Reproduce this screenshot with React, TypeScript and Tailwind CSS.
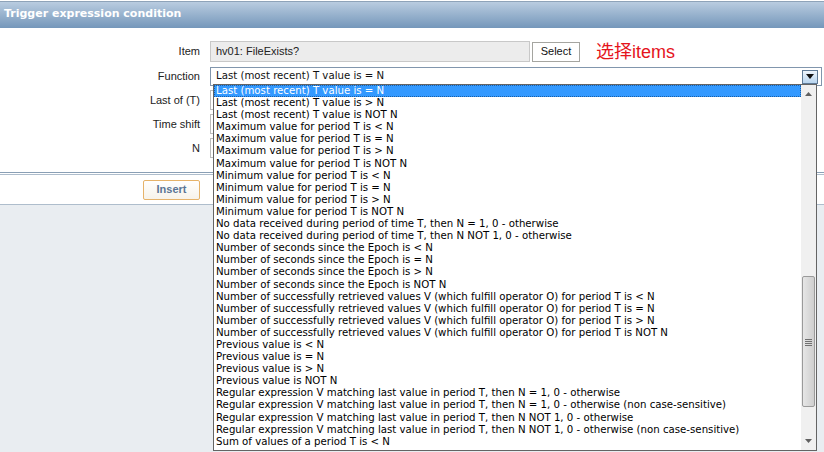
const options = [
  "Last (most recent) T value is = N",
  "Last (most recent) T value is > N",
  "Last (most recent) T value is NOT N",
  "Maximum value for period T is < N",
  "Maximum value for period T is = N",
  "Maximum value for period T is > N",
  "Maximum value for period T is NOT N",
  "Minimum value for period T is < N",
  "Minimum value for period T is = N",
  "Minimum value for period T is > N",
  "Minimum value for period T is NOT N",
  "No data received during period of time T, then N = 1, 0 - otherwise",
  "No data received during period of time T, then N NOT 1, 0 - otherwise",
  "Number of seconds since the Epoch is < N",
  "Number of seconds since the Epoch is = N",
  "Number of seconds since the Epoch is > N",
  "Number of seconds since the Epoch is NOT N",
  "Number of successfully retrieved values V (which fulfill operator O) for period T is < N",
  "Number of successfully retrieved values V (which fulfill operator O) for period T is = N",
  "Number of successfully retrieved values V (which fulfill operator O) for period T is > N",
  "Number of successfully retrieved values V (which fulfill operator O) for period T is NOT N",
  "Previous value is < N",
  "Previous value is = N",
  "Previous value is > N",
  "Previous value is NOT N",
  "Regular expression V matching last value in period T, then N = 1, 0 - otherwise",
  "Regular expression V matching last value in period T, then N = 1, 0 - otherwise (non case-sensitive)",
  "Regular expression V matching last value in period T, then N NOT 1, 0 - otherwise",
  "Regular expression V matching last value in period T, then N NOT 1, 0 - otherwise (non case-sensitive)",
  "Sum of values of a period T is < N",
];

function Row({ label, children }: { label: string; children?: React.ReactNode }) {
  return (
    <div className="flex h-[24px] items-center">
      <div className="w-[200px] text-right text-[#222]">{label}</div>
      <div className="ml-[10px] flex flex-1 items-center">{children}</div>
    </div>
  );
}

function Dropdown() {
  return (
    <div className="absolute left-[213px] top-[84px] flex h-[367px] w-[604px] border border-[#646464] bg-white font-['DejaVu_Sans',_sans-serif] text-[10.2px]">
      <div className="flex-1">
        {options.map((o, i) => (
          <div
            key={o}
            className={
              i === 0
                ? "h-[12.1px] whitespace-nowrap bg-[#3399ff] pl-[2px] leading-[12px] text-white outline-1 outline-dotted outline-[#1b5fa6] -outline-offset-1"
                : "h-[12.1px] whitespace-nowrap pl-[2px] leading-[12px] text-black"
            }
          >
            {o}
          </div>
        ))}
      </div>
      {/* scrollbar */}
      <div className="flex w-[15px] flex-col bg-[#f0f0f0]">
        <div className="flex h-[17px] items-center justify-center">
          <svg width="7" height="4" viewBox="0 0 7 4">
            <path d="M0 4 L3.5 0 L7 4 Z" fill="#606060" />
          </svg>
        </div>
        <div className="h-[174px]" />
        <div className="mx-[1px] flex h-[131px] items-center justify-center rounded-[2px] border border-[#9a9a9a] bg-gradient-to-r from-[#e6e6e6] via-[#dadada] to-[#cfcfcf]">
          <svg width="7" height="8" viewBox="0 0 7 8">
            <path d="M0 1.5 H7 M0 3.5 H7 M0 5.5 H7 M0 7.5 H7" stroke="#707070" strokeWidth="1" />
          </svg>
        </div>
        <div className="flex flex-1 items-end justify-center pb-[7px]">
          <svg width="7" height="4" viewBox="0 0 7 4">
            <path d="M0 0 L3.5 4 L7 0 Z" fill="#606060" />
          </svg>
        </div>
      </div>
    </div>
  );
}

export default function App() {
  return (
    <div className="relative h-[452px] w-[824px] overflow-hidden bg-[#e9edf1] font-['Liberation_Sans',_'Noto_Sans_CJK_SC',_sans-serif] text-[11px]">
      <div className="h-[1px] bg-white" />
      <div className="h-[27px] border-t border-[#8ea3b9] bg-gradient-to-b from-[#b9cce0] to-[#7597ba] pl-[4px] font-['DejaVu_Sans',_sans-serif] text-[11px] font-bold leading-[24px] text-white">
        Trigger expression condition
      </div>

      <div className="border-b border-[#8a9fb5] bg-white pb-[12px] pt-[11px]">
        <div className="flex h-[25px] items-center">
          <div className="w-[200px] text-right text-[#222]">Item</div>
          <div className="ml-[10px] flex items-center">
            <div className="flex h-[21px] w-[320px] items-center border border-[#c8c8c8] bg-[#ececec] pl-[5px] text-[#222]">
              hv01: FileExists?
            </div>
            <div className="ml-[2px] flex h-[20px] w-[48px] items-center justify-center border border-[#a5a5a0] bg-white text-[#111]">
              Select
            </div>
            <div className="ml-[16px] text-[18px] leading-[20px] text-[#e5141d]">选择items</div>
          </div>
        </div>
        <Row label="Function">
          <div className="relative flex h-[19px] w-[612px] items-center border border-[#8196ad] bg-white pl-[5px] font-['DejaVu_Sans',_sans-serif] text-[10.2px] text-[#111]">
            Last (most recent) T value is = N
            <div className="absolute right-[3px] top-[2px] flex h-[14px] w-[16px] items-center justify-center border border-[#5f7a96] bg-gradient-to-b from-[#eef5fc] to-[#b8d5ef]">
              <svg width="8" height="5" viewBox="0 0 8 5">
                <path d="M0 0 L4 5 L8 0 Z" fill="#111" />
              </svg>
            </div>
          </div>
        </Row>
        <Row label="Last of (T)">
          <div className="h-[20px] w-[80px] border border-[#bcbcbc] bg-white" />
        </Row>
        <Row label="Time shift">
          <div className="h-[20px] w-[80px] border border-[#bcbcbc] bg-white" />
        </Row>
        <Row label="N">
          <div className="h-[20px] w-[80px] border border-[#bcbcbc] bg-white" />
        </Row>
      </div>
      <div className="h-[1px] bg-white" />
      <div className="flex h-[31px] items-center border-b border-t border-[#aebdcc] bg-white">
        <div className="flex w-[200px] justify-end">
          <div className="flex h-[20px] w-[57px] items-center justify-center rounded-[2px] border border-[#e6b36a] bg-gradient-to-b from-white to-[#f7f3ea] font-bold text-[#5b7594]">
            Insert
          </div>
        </div>
      </div>

      <div className="absolute left-[517px] top-[120px] text-[19px] leading-[22px] text-[#e5141d]">
        设置表示式设置触发器阈值
      </div>

      <Dropdown />
    </div>
  );
}
